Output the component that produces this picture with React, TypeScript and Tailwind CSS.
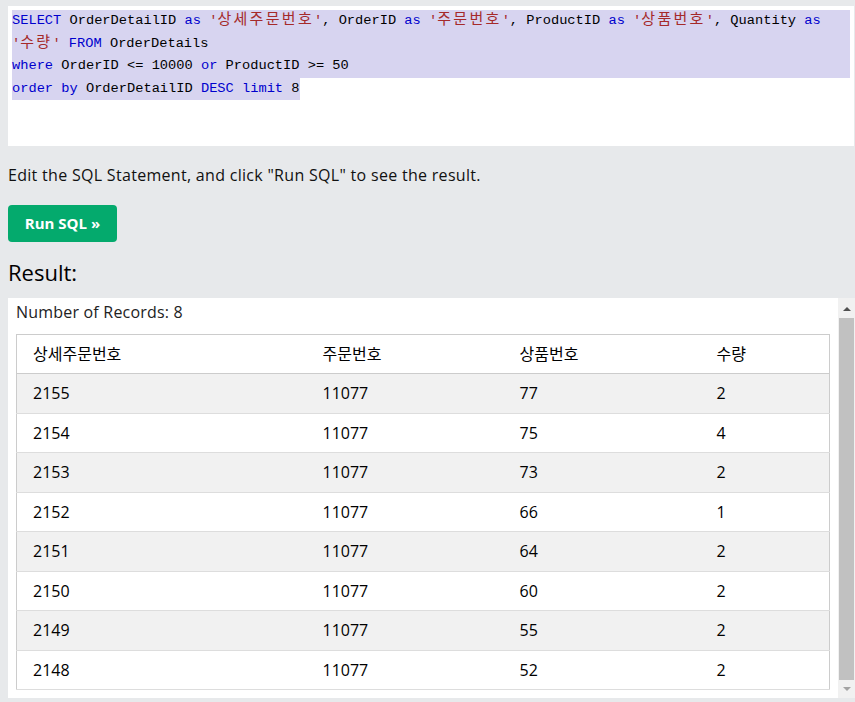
import React from 'react';

const rows = [
    ['2155', '11077', '77', '2'],
    ['2154', '11077', '75', '4'],
    ['2153', '11077', '73', '2'],
    ['2152', '11077', '66', '1'],
    ['2151', '11077', '64', '2'],
    ['2150', '11077', '60', '2'],
    ['2149', '11077', '55', '2'],
    ['2148', '11077', '52', '2'],
];

const Kw: React.FC<{ children: React.ReactNode }> = ({ children }) => (
    <span className="text-[#0000cd]">{children}</span>
);

const Str: React.FC<{ children: React.ReactNode }> = ({ children }) => (
    <span className="text-[#a52a2a]">
        '<span className="text-[15px] tracking-[2.3px]">{children}</span>'
    </span>
);

const App: React.FC = () => {
    return (
        <div
            className="w-[855px] h-[702px] bg-[#e7e9eb] overflow-hidden text-black"
            style={{ fontFamily: '"Open Sans", "Noto Sans CJK KR", sans-serif' }}
        >
            {/* SQL editor */}
            <div className="ml-2 mr-px mt-[6px] h-[140px] bg-white p-1">
                <div
                    className="text-[13.7px] leading-[22.5px] text-[#000] whitespace-pre"
                    style={{ fontFamily: '"Liberation Mono", "Noto Sans CJK KR", monospace' }}
                >
                    <div className="h-[22.5px] bg-[#d7d4f0]">
                        <Kw>SELECT</Kw> OrderDetailID <Kw>as</Kw> <Str>상세주문번호</Str>, OrderID <Kw>as</Kw> <Str>주문번호</Str>, ProductID <Kw>as</Kw> <Str>상품번호</Str>, Quantity <Kw>as</Kw>
                    </div>
                    <div className="h-[22.5px] bg-[#d7d4f0]">
                        <Str>수량</Str> <Kw>FROM</Kw> OrderDetails
                    </div>
                    <div className="h-[22.5px] bg-[#d7d4f0]">
                        <Kw>where</Kw> OrderID &lt;= 10000 <Kw>or</Kw> ProductID &gt;= 50
                    </div>
                    <div className="h-[22.5px]">
                        <span className="inline-block h-[22.5px] bg-[#d7d4f0]">
                            <Kw>order by</Kw> OrderDetailID <Kw>DESC</Kw> <Kw>limit</Kw> 8
                        </span>
                    </div>
                </div>
            </div>

            <p className="ml-2 mt-[18px] text-[16px] leading-[22px] tracking-[0.3px] text-[#111]">
                Edit the SQL Statement, and click "Run SQL" to see the result.
            </p>

            <button className="ml-2 mt-[19px] w-[109px] h-[37px] rounded bg-[#04aa6d] text-white text-[15px] font-bold">
                Run SQL »
            </button>

            <h2 className="ml-2 mt-[14px] text-[22px] leading-[32px] text-[#000]">Result:</h2>

            {/* Result panel */}
            <div className="ml-2 mt-[10px] h-[400px] bg-white flex">
                <div className="flex-1 px-2 pt-[3px]">
                    <div className="text-[16px] leading-[22px] tracking-[0.2px] text-[#222]">Number of Records: 8</div>
                    <table className="mt-[11px] w-full border-collapse border border-[#ccc] text-[16px] text-[#000]">
                        <thead>
                            <tr className="h-[39px] border-b border-[#ccc]">
                                <th className="w-[290px] pl-4 text-left font-normal">상세주문번호</th>
                                <th className="w-[197px] pl-4 text-left font-normal">주문번호</th>
                                <th className="w-[197px] pl-4 text-left font-normal">상품번호</th>
                                <th className="pl-4 text-left font-normal">수량</th>
                            </tr>
                        </thead>
                        <tbody>
                            {rows.map((r, i) => (
                                <tr
                                    key={r[0]}
                                    className={`h-[39.5px] border-b border-[#ddd] ${i % 2 === 0 ? 'bg-[#f1f1f1]' : 'bg-white'}`}
                                >
                                    {r.map((c, j) => (
                                        <td key={j} className="pl-4">{c}</td>
                                    ))}
                                </tr>
                            ))}
                        </tbody>
                    </table>
                </div>

                {/* scrollbar */}
                <div className="w-[17px] bg-[#f1f1f1] flex flex-col items-center">
                    <div className="h-[20px] flex items-center justify-center">
                        <svg width="8" height="5" viewBox="0 0 8 5">
                            <path d="M0 5 L4 1 L8 5 Z" fill="#505050" />
                        </svg>
                    </div>
                    <div className="w-[15px] h-[362px] bg-[#c1c1c1]" />
                    <div className="h-[18px] flex items-center justify-center">
                        <svg width="8" height="5" viewBox="0 0 8 5">
                            <path d="M0 0 L8 0 L4 4 Z" fill="#a3a3a3" />
                        </svg>
                    </div>
                </div>
            </div>
        </div>
    );
};

export default App;
